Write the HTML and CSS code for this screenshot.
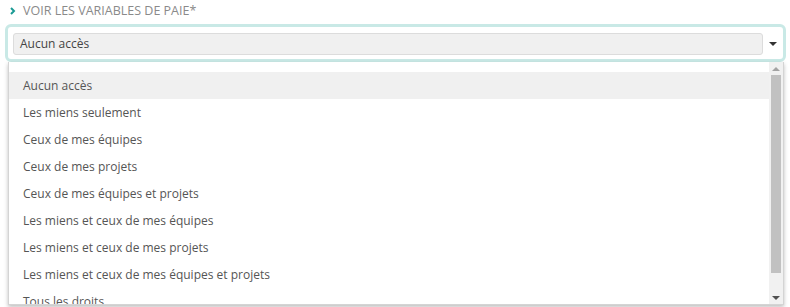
FILE: index.html
```html
<!DOCTYPE html>
<html lang="fr">
<head>
  <meta charset="UTF-8">
  <meta name="viewport" content="width=device-width, initial-scale=1.0">
  <title>Droits</title>
  <link rel="stylesheet" href="styles.css">
</head>
<body>
  <div class="field">
    <div class="field-label">
      <svg class="chevron" width="6" height="8" viewBox="0 0 6 8"><path d="M1 1 L4 4 L1 7" fill="none" stroke="#1a9a94" stroke-width="2"/></svg>
      <span>VOIR LES VARIABLES DE PAIE*</span>
    </div>
    <div class="select-wrap">
      <div class="select-box">Aucun accès</div>
      <span class="caret"></span>
    </div>

    <!-- Liste déroulante ouverte -->
    <div class="dropdown">
      <ul class="options">
        <li class="option active">Aucun accès</li>
        <li class="option">Les miens seulement</li>
        <li class="option">Ceux de mes équipes</li>
        <li class="option">Ceux de mes projets</li>
        <li class="option">Ceux de mes équipes et projets</li>
        <li class="option">Les miens et ceux de mes équipes</li>
        <li class="option">Les miens et ceux de mes projets</li>
        <li class="option">Les miens et ceux de mes équipes et projets</li>
        <li class="option">Tous les droits</li>
      </ul>
      <div class="scrollbar">
        <span class="arrow up"></span>
        <div class="thumb"></div>
        <span class="arrow down"></span>
      </div>
    </div>
  </div>
</body>
</html>
```

FILE: styles.css
```css
body, html {
  margin: 0;
  padding: 0;
  width: 100%;
  height: 100%;
  background: #fff;
  overflow: hidden;
  font-family: "Open Sans", Arial, sans-serif;
  color: #555;
}
.field {
  position: relative;
  padding-top: 1px;
}
.field-label {
  display: flex;
  align-items: center;
  gap: 7px;
  height: 19px;
  padding-left: 10px;
  font-size: 12.5px;
  color: #8a8a8a;
}
.chevron {
  display: block;
}
.select-wrap {
  display: flex;
  align-items: center;
  margin: 4px 4px 0 5px;
  padding: 6px 5px 4px 5px;
  border: 3px solid #c9e9e6;
  border-radius: 6px;
}
.select-box {
  flex: 1;
  height: 20px;
  line-height: 20px;
  padding: 0 6px;
  font-size: 12px;
  color: #444;
  background: #f0f0f0;
  border: 1px solid #dcdcdc;
  border-radius: 3px;
}
.caret {
  width: 0;
  height: 0;
  margin: 0 1px 0 6px;
  border-left: 4px solid transparent;
  border-right: 4px solid transparent;
  border-top: 4px solid #333;
}
/* menu ouvert au-dessus du contenu */
.dropdown {
  position: absolute;
  top: 62px;
  left: 8px;
  width: 774px;
  height: 242px;
  display: flex;
  background: #fff;
  border: 1px solid #d4d4d4;
  border-top: none;
  box-shadow: 0 2px 4px rgba(0, 0, 0, 0.25);
  overflow: hidden;
}
.options {
  flex: 1;
  list-style: none;
  margin: 0;
  padding: 10px 0 0 0;
  overflow: hidden;
}
.option {
  height: 27px;
  line-height: 27px;
  padding-left: 14px;
  font-size: 12px;
  color: #555;
}
.option.active {
  background: #f0f0f0;
}
.scrollbar {
  width: 14px;
  display: flex;
  flex-direction: column;
  align-items: center;
  background: #f1f1f1;
  padding: 5px 0 4px;
}
.thumb {
  width: 10px;
  flex: 1;
  margin: 4px 0 23px;
  background: #c1c1c1;
}
.arrow {
  width: 0;
  height: 0;
  border-left: 4px solid transparent;
  border-right: 4px solid transparent;
}
.arrow.up {
  border-bottom: 4px solid #a3a3a3;
}
.arrow.down {
  border-top: 4px solid #505050;
}
```
